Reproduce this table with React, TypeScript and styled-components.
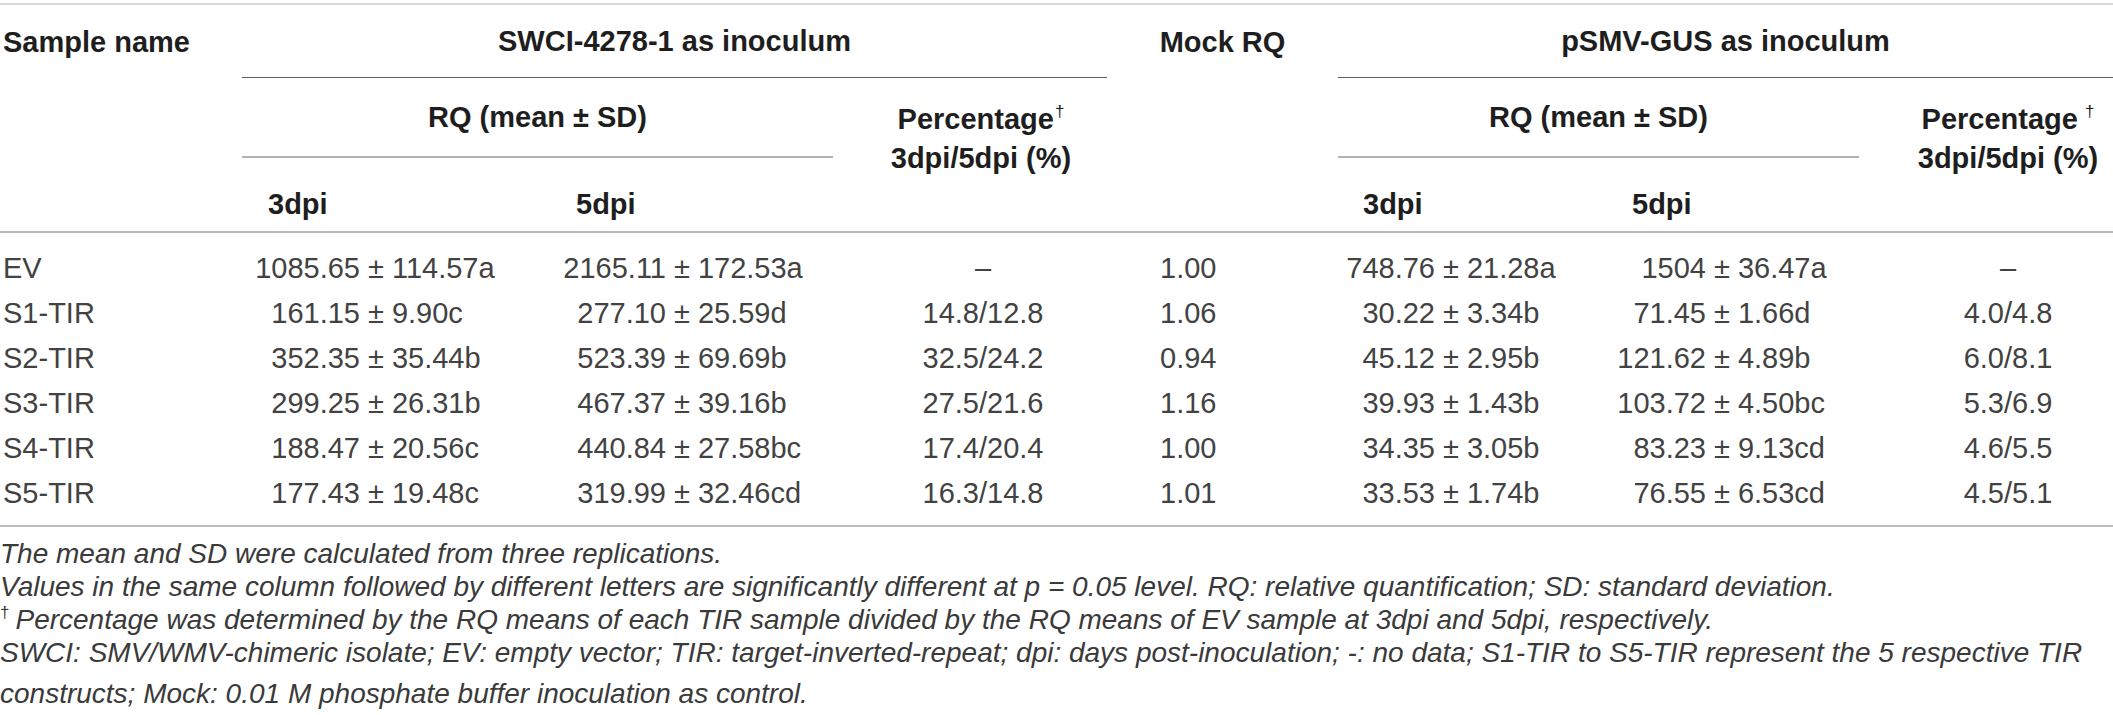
import styled, { createGlobalStyle } from "styled-components";

const GlobalStyle = createGlobalStyle`
  body {
    margin: 0;
    background: #fff;
    font-family: "Liberation Sans", Arial, Helvetica, sans-serif;
    color: #231f20;
  }
`;

// column tracks shared by header and body rows
const COLS = "242px 308px 283px 274px 231px 269px 252px 254px";

const Page = styled.div`
  width: 2113px;
  padding-top: 3px;
`;

const Table = styled.div`
  border-top: 2px solid #dadada;
`;

const Head = styled.div`
  display: grid;
  grid-template-columns: ${COLS};
  grid-template-rows: 73px 80px 73px;
  border-bottom: 2px solid #b8b8b8;
  font-size: 29px;
  font-weight: 700;
  color: #1e1e1e;
`;

type HeadProps = {
  $col: string;
  $row: string;
  $line?: "dark" | "grey";
  $center?: boolean;
  $top?: number;
  $pad?: number;
};

const HeadCell = styled.div<HeadProps>`
  grid-column: ${(p) => p.$col};
  grid-row: ${(p) => p.$row};
  display: flex;
  align-items: ${(p) => (p.$top !== undefined ? "flex-start" : "center")};
  justify-content: ${(p) => (p.$center ? "center" : "flex-start")};
  padding-top: ${(p) => p.$top ?? 0}px;
  padding-left: ${(p) => p.$pad ?? 0}px;
  border-bottom: ${(p) =>
    p.$line === "dark"
      ? "1px solid #5c5c5c"
      : p.$line === "grey"
      ? "2px solid #b3b3b3"
      : "none"};
  white-space: nowrap;
  line-height: 36px;
`;

const DpiLabel = styled.span`
  padding-top: 18px;
`;

const TwoLine = styled.div`
  text-align: center;
  line-height: 39px;
`;

const Dagger = styled.sup<{ $gap?: boolean }>`
  font-size: 17px;
  font-weight: 400;
  vertical-align: 12px;
  line-height: 0;
  margin-left: ${(p) => (p.$gap ? "7px" : "1px")};
`;

const Body = styled.div`
  padding: 13px 0 9px;
  border-bottom: 2px solid #bdbdbd;
`;

const Row = styled.div`
  display: grid;
  grid-template-columns: ${COLS};
  height: 45px;
  align-items: center;
  font-size: 29px;
  color: #424242;
  white-space: nowrap;
`;

const NameCell = styled.div`
  padding-left: 3px;
`;

const ValueCell = styled.div`
  display: flex;
  align-items: baseline;
`;

const Lead = styled.span<{ $w: number }>`
  display: flex;
  justify-content: flex-end;
  width: ${(p) => p.$w}px;
  flex: none;
`;

const Pm = styled.span`
  margin: 0 8px;
`;

const CenterCell = styled.div<{ $pad: number }>`
  text-align: center;
  padding-left: ${(p) => p.$pad}px;
`;

const MockCell = styled.div`
  padding-left: 53px;
`;

const Notes = styled.div`
  padding-top: 10px;
  font-size: 28px;
  font-style: italic;
  line-height: 33px;
  color: #3a3a3a;
  white-space: nowrap;
`;

const Note = styled.div<{ $gap?: number }>`
  margin-top: ${(p) => p.$gap ?? 0}px;
`;

const NoteDagger = styled.sup`
  font-style: normal;
  font-size: 17px;
  vertical-align: 11px;
  line-height: 0;
  margin-right: 6px;
`;

type Pair = [string, string];

interface Sample {
  name: string;
  s3: Pair;
  s5: Pair;
  sPct: string;
  mock: string;
  p3: Pair;
  p5: Pair;
  pPct: string;
}

const rows: Sample[] = [
  { name: "EV", s3: ["1085.65", "114.57a"], s5: ["2165.11", "172.53a"], sPct: "–", mock: "1.00", p3: ["748.76", "21.28a"], p5: ["1504", "36.47a"], pPct: "–" },
  { name: "S1-TIR", s3: ["161.15", "9.90c"], s5: ["277.10", "25.59d"], sPct: "14.8/12.8", mock: "1.06", p3: ["30.22", "3.34b"], p5: ["71.45", "1.66d"], pPct: "4.0/4.8" },
  { name: "S2-TIR", s3: ["352.35", "35.44b"], s5: ["523.39", "69.69b"], sPct: "32.5/24.2", mock: "0.94", p3: ["45.12", "2.95b"], p5: ["121.62", "4.89b"], pPct: "6.0/8.1" },
  { name: "S3-TIR", s3: ["299.25", "26.31b"], s5: ["467.37", "39.16b"], sPct: "27.5/21.6", mock: "1.16", p3: ["39.93", "1.43b"], p5: ["103.72", "4.50bc"], pPct: "5.3/6.9" },
  { name: "S4-TIR", s3: ["188.47", "20.56c"], s5: ["440.84", "27.58bc"], sPct: "17.4/20.4", mock: "1.00", p3: ["34.35", "3.05b"], p5: ["83.23", "9.13cd"], pPct: "4.6/5.5" },
  { name: "S5-TIR", s3: ["177.43", "19.48c"], s5: ["319.99", "32.46cd"], sPct: "16.3/14.8", mock: "1.01", p3: ["33.53", "1.74b"], p5: ["76.55", "6.53cd"], pPct: "4.5/5.1" },
];

function Value({ v, lead }: { v: Pair; lead: number }) {
  return (
    <ValueCell>
      <Lead $w={lead}>{v[0]}</Lead>
      <Pm>±</Pm>
      <span>{v[1]}</span>
    </ValueCell>
  );
}

export default function App() {
  return (
    <Page>
      <GlobalStyle />
      <Table>
        <Head>
          <HeadCell $col="1" $row="1" $pad={3}>Sample name</HeadCell>
          <HeadCell $col="2 / 5" $row="1" $line="dark" $center>SWCI-4278-1 as inoculum</HeadCell>
          <HeadCell $col="5" $row="1" $center>Mock RQ</HeadCell>
          <HeadCell $col="6 / 9" $row="1" $line="dark" $center>pSMV-GUS as inoculum</HeadCell>

          <HeadCell $col="2 / 4" $row="2" $line="grey" $center>RQ (mean ± SD)</HeadCell>
          <HeadCell $col="4" $row="2 / 4" $center $top={22} $pad={22}>
            <TwoLine>
              Percentage<Dagger>†</Dagger>
              <br />
              3dpi/5dpi (%)
            </TwoLine>
          </HeadCell>
          <HeadCell $col="6 / 8" $row="2" $line="grey" $center>RQ (mean ± SD)</HeadCell>
          <HeadCell $col="8" $row="2 / 4" $center $top={22} $pad={44}>
            <TwoLine>
              Percentage<Dagger $gap>†</Dagger>
              <br />
              3dpi/5dpi (%)
            </TwoLine>
          </HeadCell>

          <HeadCell $col="2" $row="3" $pad={26}><DpiLabel>3dpi</DpiLabel></HeadCell>
          <HeadCell $col="3" $row="3" $pad={26}><DpiLabel>5dpi</DpiLabel></HeadCell>
          <HeadCell $col="6" $row="3" $pad={25}><DpiLabel>3dpi</DpiLabel></HeadCell>
          <HeadCell $col="7" $row="3" $pad={25}><DpiLabel>5dpi</DpiLabel></HeadCell>
        </Head>

        <Body>
          {rows.map((r) => (
            <Row key={r.name}>
              <NameCell>{r.name}</NameCell>
              <Value v={r.s3} lead={118} />
              <Value v={r.s5} lead={116} />
              <CenterCell $pad={26}>{r.sPct}</CenterCell>
              <MockCell>{r.mock}</MockCell>
              <Value v={r.p3} lead={97} />
              <Value v={r.p5} lead={99} />
              <CenterCell $pad={44}>{r.pPct}</CenterCell>
            </Row>
          ))}
        </Body>
      </Table>

      <Notes>
        <Note>The mean and SD were calculated from three replications.</Note>
        <Note>
          Values in the same column followed by different letters are significantly different at p = 0.05 level. RQ:
          relative quantification; SD: standard deviation.
        </Note>
        <Note>
          <NoteDagger>†</NoteDagger>Percentage was determined by the RQ means of each TIR sample divided by the RQ means
          of EV sample at 3dpi and 5dpi, respectively.
        </Note>
        <Note>
          SWCI: SMV/WMV-chimeric isolate; EV: empty vector; TIR: target-inverted-repeat; dpi: days post-inoculation; -:
          no data; S1-TIR to S5-TIR represent the 5 respective TIR
        </Note>
        <Note $gap={8}>constructs; Mock: 0.01 M phosphate buffer inoculation as control.</Note>
      </Notes>
    </Page>
  );
}
